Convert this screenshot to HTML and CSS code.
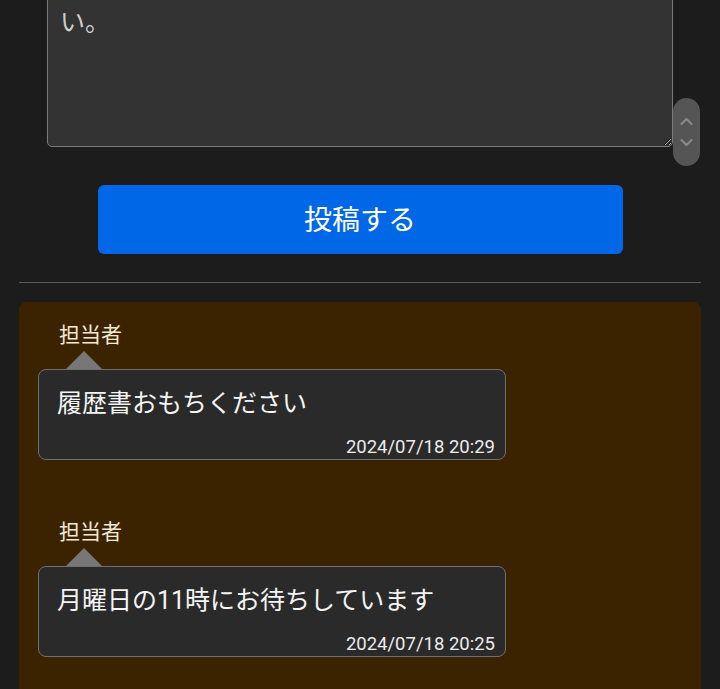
FILE: index.html
```html
<!DOCTYPE html>
<html lang="ja">
<head>
<meta charset="utf-8">
<title>投稿</title>
<link rel="stylesheet" href="styles.css">
</head>
<body>
<div class="page">
  <section class="compose">
    <textarea class="input" readonly>い。</textarea>
    <div class="spinner">
      <svg width="27" height="68" viewBox="0 0 27 68">
        <path d="M8.5 26 L13.5 21 L18.5 26" fill="none" stroke="#8c8c8c" stroke-width="2" stroke-linecap="round" stroke-linejoin="round"/>
        <path d="M8.5 42 L13.5 47 L18.5 42" fill="none" stroke="#8c8c8c" stroke-width="2" stroke-linecap="round" stroke-linejoin="round"/>
      </svg>
    </div>
    <button class="submit" type="button">投稿する</button>
  </section>
  <hr class="divider">
  <section class="thread">
    <div class="msg">
      <div class="who">担当者</div>
      <div class="arrow"></div>
      <div class="bubble">
        <p class="text">履歴書おもちください</p>
        <div class="time">2024/07/18 20:29</div>
      </div>
    </div>
    <div class="msg">
      <div class="who">担当者</div>
      <div class="arrow"></div>
      <div class="bubble">
        <p class="text">月曜日の11時にお待ちしています</p>
        <div class="time">2024/07/18 20:25</div>
      </div>
    </div>
  </section>
</div>
</body>
</html>
```
FILE: styles.css
```css
* { box-sizing: border-box; }
html, body { margin: 0; padding: 0; }
body {
  background: #1c1c1c;
  font-family: Roboto, "Noto Sans CJK JP", sans-serif;
  color: #fff;
  overflow: hidden;
}
.page {
  padding: 0 19px;
}
.compose {
  position: relative;
  display: flex;
  flex-direction: column;
  align-items: center;
}
.input {
  display: block;
  align-self: stretch;
  margin: -40px 28px 0;
  height: 187px;
  padding: 41px 12px 0;
  background: #333333;
  border: 1px solid #7a7a7a;
  border-radius: 5px;
  color: #cfcfcf;
  font-family: "Noto Sans CJK JP", sans-serif;
  font-size: 25px;
  line-height: 36px;
  resize: vertical;
  outline: none;
}
.spinner {
  position: absolute;
  left: 654px;
  top: 98px;
  width: 27px;
  height: 68px;
  border-radius: 14px;
  background: #555555;
}
.spinner svg { display: block; }
.submit {
  margin-top: 38px;
  width: 525px;
  height: 69px;
  background: #0068e6;
  border: none;
  border-radius: 6px;
  color: #fff;
  font-family: "Noto Sans CJK JP", sans-serif;
  font-size: 28px;
  padding: 0 0 3px;
}
.divider {
  margin: 28px 0 0;
  border: none;
  border-top: 1.5px solid #5a5a5a;
  height: 0;
}
.thread {
  margin-top: 19px;
  background: #3c2300;
  border-radius: 8px;
  padding: 16px 19px 40px;
}
.msg + .msg { margin-top: 55px; }
.who {
  padding-left: 21px;
  font-family: "Noto Sans CJK JP", sans-serif;
  font-size: 21px;
  line-height: 31px;
  color: #f3e8d6;
  margin-bottom: 2px;
}
.arrow {
  margin-left: 28px;
  width: 0;
  height: 0;
  border-left: 18px solid transparent;
  border-right: 18px solid transparent;
  border-bottom: 18px solid #777777;
}
.bubble {
  width: 468px;
  background: #2a2a2a;
  border: 1px solid #6f6f6f;
  border-radius: 8px;
  padding: 16px 10px 0 18px;
}
.text {
  margin: 0;
  font-size: 25px;
  line-height: 36px;
  color: #f4f4f4;
}
.time {
  margin-top: 13px;
  text-align: right;
  font-family: Roboto, sans-serif;
  font-size: 18.5px;
  line-height: 24px;
  color: #ececec;
}
```
